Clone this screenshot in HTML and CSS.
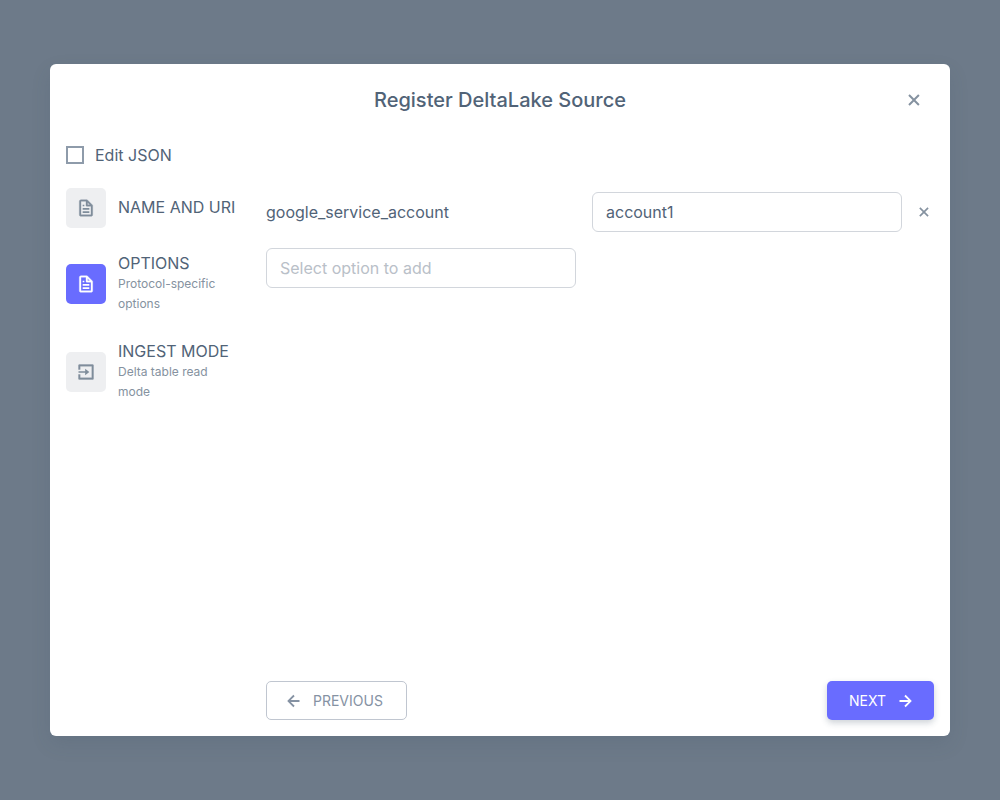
FILE: index.html
```html
<!DOCTYPE html>
<html lang="en">
<head>
<meta charset="utf-8">
<title>Register DeltaLake Source</title>
<link rel="stylesheet" href="styles.css">
</head>
<body>
<svg class="sprite" aria-hidden="true">
  <symbol id="file" viewBox="0 0 24 24"><path d="M19.903 8.586a.997.997 0 0 0-.196-.293l-6-6a.997.997 0 0 0-.293-.196c-.03-.014-.062-.022-.094-.033a.991.991 0 0 0-.259-.051C13.04 2.011 13.021 2 13 2H6c-1.103 0-2 .897-2 2v16c0 1.103.897 2 2 2h12c1.103 0 2-.897 2-2V9c0-.021-.011-.04-.013-.062a.952.952 0 0 0-.051-.259c-.01-.033-.019-.064-.033-.093zM16.586 8H14V5.414L16.586 8zM6 20V4h6v5a1 1 0 0 0 1 1h5l.002 10H6z" stroke="currentColor" stroke-width=".4"/><path d="M8 12h8v2H8zm0 4h8v2H8zm0-8h2v2H8z"/></symbol>
  <symbol id="import" viewBox="0 0 24 24"><path d="M4 3h16a1 1 0 0 1 1 1v16a1 1 0 0 1-1 1H4a1 1 0 0 1-1-1v-5h2v4h14V5H5v4H3V4a1 1 0 0 1 1-1z" stroke="currentColor" stroke-width=".4"/><path d="M3 11h8V8l5 4-5 4v-3H3z"/></symbol>
  <symbol id="close" viewBox="0 0 24 24"><path d="m16.192 6.344-4.243 4.242-4.242-4.242-1.414 1.414L10.535 12l-4.242 4.242 1.414 1.414 4.242-4.242 4.243 4.242 1.414-1.414L13.364 12l4.242-4.242z"/></symbol>
  <symbol id="left" viewBox="0 0 24 24"><path d="M12.707 17.293 8.414 13H18v-2H8.414l4.293-4.293-1.414-1.414L4.586 12l6.707 6.707z"/></symbol>
  <symbol id="right" viewBox="0 0 24 24"><path d="m11.293 17.293 1.414 1.414L19.414 12l-6.707-6.707-1.414 1.414L15.586 11H6v2h9.586z"/></symbol>
</svg>
<main class="backdrop">
  <section class="dialog" role="dialog" aria-labelledby="title">
    <header class="dialog-header">
      <h1 class="title" id="title">Register DeltaLake Source</h1>
      <button class="icon-button" type="button" aria-label="Close"><svg class="icon-close"><use href="#close"/></svg></button>
    </header>
    <label class="edit-json"><input class="checkbox" type="checkbox">Edit JSON</label>
    <div class="content">
      <nav class="steps" aria-label="Steps">
        <button class="step" type="button">
          <span class="step-icon"><svg class="icon"><use href="#file"/></svg></span>
          <span class="step-text"><span class="step-title">NAME AND URI</span></span>
        </button>
        <button class="step" type="button" aria-current="step">
          <span class="step-icon step-icon-active"><svg class="icon"><use href="#file"/></svg></span>
          <span class="step-text"><span class="step-title">OPTIONS</span><span class="step-note">Protocol-specific options</span></span>
        </button>
        <button class="step" type="button">
          <span class="step-icon"><svg class="icon"><use href="#import"/></svg></span>
          <span class="step-text"><span class="step-title">INGEST MODE</span><span class="step-note">Delta table read mode</span></span>
        </button>
      </nav>
      <form class="panel">
        <div class="options">
          <label class="option-name" for="account">google_service_account</label>
          <input class="field" id="account" type="text" value="account1">
          <button class="remove" type="button" aria-label="Remove option"><svg class="icon-remove"><use href="#close"/></svg></button>
          <input class="field" type="text" placeholder="Select option to add" aria-label="Select option to add">
        </div>
        <footer class="actions">
          <button class="button button-outline" type="button"><svg class="icon-arrow"><use href="#left"/></svg>PREVIOUS</button>
          <button class="button button-primary" type="button">NEXT<svg class="icon-arrow"><use href="#right"/></svg></button>
        </footer>
      </form>
    </div>
  </section>
</main>
</body>
</html>
```
FILE: styles.css
```css
* {
  box-sizing: border-box;
}

body {
  margin: 0;
  background: #6d7a89;
  color: #516377;
  font-family: Inter, "Liberation Sans", sans-serif;
  font-size: 16px;
  line-height: 24px;
}

button,
input {
  font: inherit;
  color: inherit;
}

button {
  padding: 0;
  border: 0;
  background: none;
  cursor: pointer;
}

svg {
  display: block;
  fill: currentColor;
}

.sprite {
  display: none;
}

.backdrop {
  display: flex;
  align-items: center;
  justify-content: center;
  min-height: 100vh;
  padding: 64px 48px;
}

.dialog {
  display: flex;
  flex-direction: column;
  width: 100%;
  max-width: 900px;
  min-height: 84vh;
  padding: 16px;
  border-radius: 6px;
  background: #fff;
  box-shadow: 0 8px 20px rgba(50, 71, 92, 0.12);
}

.dialog-header {
  display: grid;
  grid-template-columns: 40px 1fr 40px;
  align-items: center;
  min-height: 40px;
}

.title {
  grid-column: 2;
  margin: 0;
  font-size: 20px;
  line-height: 32px;
  font-weight: 500;
  text-align: center;
}

.icon-button {
  display: grid;
  place-items: center;
  width: 40px;
  height: 40px;
  color: #8592a0;
}

.icon-close {
  width: 24px;
  height: 24px;
}

.edit-json {
  display: flex;
  align-items: center;
  gap: 11px;
  align-self: flex-start;
  margin-top: 23px;
}

.checkbox {
  appearance: none;
  width: 18px;
  height: 18px;
  margin: 0;
  border: 2px solid #8e9baa;
}

.checkbox:checked {
  background: #696cff;
}

.content {
  display: flex;
  flex: 1;
  gap: 32px;
  margin-top: 21px;
}

.steps {
  display: flex;
  flex-direction: column;
  flex: 0 0 168px;
  gap: 24px;
  min-width: 0;
}

.step {
  display: flex;
  align-items: center;
  gap: 12px;
  text-align: left;
}

.step-icon {
  display: grid;
  place-items: center;
  flex: 0 0 40px;
  height: 40px;
  border-radius: 5px;
  background: #eeeff1;
  color: #7f8d9b;
}

.step-icon-active {
  background: #696cff;
  color: #fff;
}

.icon {
  width: 20px;
  height: 20px;
}

.step-text {
  padding-bottom: 2px;
}

.step-title {
  display: block;
  line-height: 22px;
  white-space: nowrap;
}

.step-note {
  display: block;
  font-size: 12px;
  line-height: 20px;
  color: #8592a0;
}

.panel {
  display: flex;
  flex: 1;
  flex-direction: column;
  justify-content: space-between;
  min-width: 0;
}

.options {
  display: grid;
  grid-template-columns: 1fr 1fr 16px;
  align-items: center;
  gap: 16px;
  padding-top: 4px;
}

.option-name {
  overflow-wrap: anywhere;
}

.field {
  width: 100%;
  min-width: 0;
  height: 40px;
  padding: 0 13px;
  border: 1px solid #d2d6dc;
  border-radius: 6px;
  background: #fff;
}

.field::placeholder {
  color: #b9c0c8;
  opacity: 1;
}

.remove {
  justify-self: end;
  color: #8592a0;
}

.icon-remove {
  width: 20px;
  height: 20px;
}

.actions {
  display: flex;
  justify-content: space-between;
}

.button {
  display: flex;
  align-items: center;
  gap: 8px;
  height: 39px;
  border-radius: 5px;
  font-size: 14px;
}

.button-outline {
  padding: 0 23px 0 16px;
  border: 1px solid #c0c6d0;
  color: #8592a3;
}

.button-primary {
  padding: 0 18px 0 22px;
  background: #696cff;
  color: #fff;
  box-shadow: 0 3px 6px rgba(50, 71, 92, 0.24);
}

.icon-arrow {
  width: 22px;
  height: 22px;
}
```
